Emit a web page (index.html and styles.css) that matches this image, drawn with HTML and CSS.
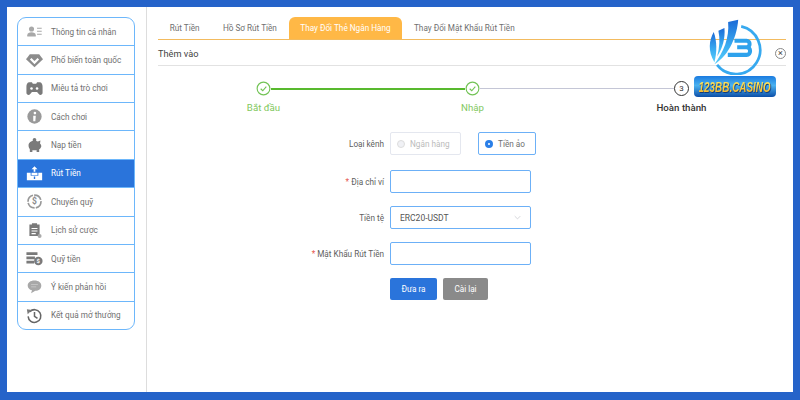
FILE: index.html
```html
<!DOCTYPE html>
<html lang="en">
<head>
    <meta charset="UTF-8">
    <title>Rút Tiền</title>
    <link rel="stylesheet" href="styles.css">
</head>
<body>
    <div class="frame">
        <aside class="side">
            <ul class="menu">
                <li class="menu-item">
                    <svg class="icon icon-light" viewBox="0 0 20 20"><circle cx="6.500" cy="7" r="3"/><path d="M1.500 16v-1.500c0-2.500 2.500-3.500 5-3.500s5 1 5 3.500V16z"/><path d="M13 5.500h5.500v1.300H13zM13 9h5.500v1.300H13zM13 12.500h5.500v1.300H13z"/></svg>
                    <span>Thông tin cá nhân</span>
                </li>
                <li class="menu-item">
                    <svg class="icon" viewBox="0 0 20 20"><path d="M4.500 2.500h11l4.500 6-10 9.500L0 8.500z"/><path d="M5.500 8l4.500 4.500L14.500 8" fill="none" stroke="#fff" stroke-width="2.600"/></svg>
                    <span>Phổ biến toàn quốc</span>
                </li>
                <li class="menu-item">
                    <svg class="icon icon-dark" viewBox="0 0 20 20"><path d="M4 2.500h3l1 2h4l1-2h3c2.500 0 3.500 2.500 3.500 5.500v7c0 2.500-3 3.500-4.500 1.500L13 14H7l-2 2.500C3.500 18.500.500 17.500.500 15V8c0-3 1-5.500 3.500-5.500z"/><circle cx="6.500" cy="10" r="1.500" fill="#fff"/><circle cx="13" cy="10" r="1.500" fill="#fff"/></svg>
                    <span>Miêu tả trò chơi</span>
                </li>
                <li class="menu-item">
                    <svg class="icon icon-mid" viewBox="0 0 20 20"><circle cx="10" cy="10" r="8.400"/><circle cx="10.500" cy="6" r="1.500" fill="#fff"/><path d="M8.500 9h3l-.5 6.500H8.500z" fill="#fff"/></svg>
                    <span>Cách chơi</span>
                </li>
                <li class="menu-item">
                    <svg class="icon icon-dark" viewBox="0 0 20 20"><circle cx="10" cy="3.500" r="2.200"/><path d="M3 10c0-3.500 3-5.500 7-5.500 1.500 0 3 .2 4 .8L17 4l-.5 3.500c1 1 1.500 2 1.500 3 0 1.500-1 3-2.500 4v3h-3v-2h-5v2h-3v-3C4 13.500 3 12 3 10z"/></svg>
                    <span>Nạp tiền</span>
                </li>
                <li class="menu-item is-active">
                    <svg class="icon" viewBox="0 0 20 20"><path d="M10 1.500l3.500 3.500H11v3H9V5H6.500z"/><path d="M1 9h4.500v3.500h9V9H19v9H1z"/><path d="M6.500 9h7v3h-7z"/><path d="M9.200 13.500h1.600v3H9.200z" fill="#2a74db"/></svg>
                    <span>Rút Tiền</span>
                </li>
                <li class="menu-item">
                    <svg class="icon" viewBox="0 0 20 20"><circle cx="10" cy="10" r="7.600" fill="none" stroke="#999" stroke-width="2" stroke-dasharray="10 1.500"/><text class="icon-dollar" x="10" y="13.500">$</text></svg>
                    <span>Chuyển quỹ</span>
                </li>
                <li class="menu-item">
                    <svg class="icon icon-dark" viewBox="0 0 20 20"><path d="M4 3h3V1.500h6V3h3v13.500H4z"/><path d="M6.500 7h7v1.300h-7zM6.500 10h7v1.300h-7zM6.500 13h5v1.300h-5z" fill="#fff"/><circle cx="16" cy="16.500" r="2.300" fill="#aaa"/></svg>
                    <span>Lịch sử cược</span>
                </li>
                <li class="menu-item">
                    <svg class="icon icon-dark" viewBox="0 0 20 20"><path d="M.500 2.500h13v3.500H.500zM.500 7.500h10V11H.500zM.500 12.500h9V16H.500z"/><circle cx="14.500" cy="13" r="5"/><text class="icon-dollar icon-dollar-small" x="14.500" y="15.500">$</text></svg>
                    <span>Quỹ tiền</span>
                </li>
                <li class="menu-item">
                    <svg class="icon icon-light" viewBox="0 0 20 20"><path d="M10 3c5 0 8 2.500 8 6s-3 6-7 6l-5 3 1-3.500C4 13.500 2 11.500 2 9c0-3.500 3-6 8-6z"/><path d="M6 7h8v1H6zM6 10h6v1H6z" fill="#ccc"/></svg>
                    <span>Ý kiến phản hồi</span>
                </li>
                <li class="menu-item">
                    <svg class="icon icon-dark" viewBox="0 0 20 20"><path d="M4.500 5.500a7.500 7.500 0 1 1-2 5.500" fill="none" stroke="#666" stroke-width="1.800"/><path d="M1 2.500l6 1-5 5z"/><path d="M10 6v5l3.500 2.500" fill="none" stroke="#666" stroke-width="1.800"/></svg>
                    <span>Kết quả mở thưởng</span>
                </li>
            </ul>
        </aside>

        <main class="content">
            <nav class="tabs">
                <a class="tab">Rút Tiền</a>
                <a class="tab">Hồ Sơ Rút Tiền</a>
                <a class="tab is-current">Thay Đổi Thẻ Ngân Hàng</a>
                <a class="tab">Thay Đổi Mật Khẩu Rút Tiền</a>
            </nav>

            <div class="panel-head">
                <span>Thêm vào</span>
                <span class="close">×</span>
            </div>

            <div class="steps">
                <div class="step is-done">
                    <svg class="step-dot" viewBox="0 0 16 16"><circle cx="8" cy="8" r="6.800"/><path d="M5 8.300l2.200 2.100L11 6"/></svg>
                    <span class="step-name">Bắt đầu</span>
                </div>
                <div class="step-line is-done"></div>
                <div class="step is-done">
                    <svg class="step-dot" viewBox="0 0 16 16"><circle cx="8" cy="8" r="6.800"/><path d="M5 8.300l2.200 2.100L11 6"/></svg>
                    <span class="step-name">Nhập</span>
                </div>
                <div class="step-line"></div>
                <div class="step is-now">
                    <span class="step-num">3</span>
                    <span class="step-name">Hoàn thành</span>
                </div>
            </div>

            <form class="form">
                <div class="row row-first">
                    <label class="row-label">Loại kênh</label>
                    <div class="choices">
                        <span class="choice is-off"><i class="dot"></i>Ngân hàng</span>
                        <span class="choice is-on"><i class="dot"></i>Tiền ảo</span>
                    </div>
                </div>
                <div class="row">
                    <label class="row-label"><b>*</b> Địa chỉ ví</label>
                    <div class="field"></div>
                </div>
                <div class="row">
                    <label class="row-label">Tiền tệ</label>
                    <div class="field field-select">ERC20-USDT
                        <svg class="chevron" viewBox="0 0 10 6"><path d="M1 1l4 4 4-4"/></svg>
                    </div>
                </div>
                <div class="row">
                    <label class="row-label"><b>*</b> Mật Khẩu Rút Tiền</label>
                    <div class="field"></div>
                </div>
                <div class="row row-buttons">
                    <span class="row-label"></span>
                    <button type="button" class="btn btn-main">Đưa ra</button>
                    <button type="button" class="btn btn-reset">Cài lại</button>
                </div>
            </form>
        </main>

        <div class="logo">
            <svg class="logo-mark" viewBox="50 10 170 170">
                <defs>
                    <linearGradient id="mark" x1="0" y1="0" x2="0" y2="1">
                        <stop offset="0" stop-color="#1c6ad6"/>
                        <stop offset="0.6" stop-color="#3aaef2"/>
                        <stop offset="1" stop-color="#58cdfa"/>
                    </linearGradient>
                </defs>
                <path d="M70 52C56 78 52 108 72 142c8-30 8-62-2-90z" fill="url(#mark)"/>
                <path d="M84 48l18-8c3 30-6 62-22 85 8-28 9-54 4-77z" fill="url(#mark)"/>
                <path d="M113 22l30-7c-3 45-25 105-71 133 28-38 45-78 41-126z" fill="url(#mark)"/>
                <path d="M152 35A72 72 0 1 1 80 150" fill="none" stroke="#37a9ef" stroke-width="8"/>
                <path d="M132 78h36c12 0 12 19 0 19h-28M168 97c14 0 14 23 0 23h-56" fill="none" stroke="#2ea2ec" stroke-width="12"/>
            </svg>
            <div class="logo-banner">
                <span class="logo-name">123BB.CASINO</span>
            </div>
        </div>
    </div>
</body>
</html>
```

FILE: styles.css
```css
* {
    box-sizing: border-box;
}

html,
body {
    height: 100%;
}

body {
    margin: 0;
    padding: 7px 7px 8px 7px;
    background-color: #2563c9;
    font-family: Roboto, 'Liberation Sans', sans-serif;
    font-size: 8.200px;
    color: #707070;
}

.frame {
    position: relative;
    display: flex;
    height: 100%;
    background-color: #ffffff;
}

.side {
    width: 140px;
    padding: 10px 11px 0 10px;
    border-right: 1px solid #dddddd;
    flex-shrink: 0;
}

.menu {
    margin: 0;
    padding: 0;
    list-style: none;
    border: 1px solid #6db7fb;
    border-radius: 9px;
    overflow: hidden;
    height: 313px;
    display: flex;
    flex-direction: column;
}

.menu-item {
    flex: 1;
    display: flex;
    align-items: center;
    padding-left: 8px;
    gap: 8px;
    border-bottom: 1px solid #6db7fb;
}

.menu-item:last-child {
    border-bottom: none;
}

.icon {
    width: 17px;
    height: 17px;
    flex-shrink: 0;
    fill: #8c8c8c;
}

.icon-light {
    fill: #a8a8a8;
}

.icon-mid {
    fill: #999999;
}

.icon-dark {
    fill: #7a7a7a;
}

.icon-dollar {
    font-size: 10px;
    font-weight: 700;
    text-anchor: middle;
    fill: #8c8c8c;
}

.icon-dollar-small {
    font-size: 7px;
    fill: #ffffff;
}

.is-active {
    background-color: #2a74db;
    color: #ffffff;
}

.is-active .icon {
    fill: #ffffff;
}

.content {
    flex: 1;
    padding: 10px 7px 0 11px;
}

.tabs {
    display: flex;
    height: 23px;
    border-bottom: 1px solid #f3bb5e;
}

.tab {
    display: flex;
    align-items: center;
    justify-content: center;
    padding: 0 11.700px;
    border-radius: 6px 6px 0 0;
    white-space: nowrap;
}

.is-current {
    background-color: #ffb846;
    color: #ffffff;
}

.panel-head {
    display: flex;
    justify-content: space-between;
    align-items: center;
    height: 26px;
    padding-top: 2px;
    border-bottom: 1px solid #e2e2e2;
    font-size: 9.200px;
    color: #444444;
}

.close {
    width: 11px;
    height: 11px;
    border: 1px solid #888888;
    border-radius: 50%;
    font-size: 9px;
    line-height: 8px;
    text-align: center;
}

.steps {
    display: flex;
    align-items: flex-start;
    padding: 15px 97px 0 98px;
    height: 66px;
}

.step {
    position: relative;
    width: 15px;
    height: 15px;
    flex-shrink: 0;
}

.step-dot {
    display: block;
    width: 15px;
    height: 15px;
    fill: none;
    stroke: #72c355;
    stroke-width: 1.200;
}

.step-name {
    position: absolute;
    top: 21px;
    left: 50%;
    transform: translateX(-50%);
    white-space: nowrap;
    font-size: 9.700px;
    color: #82c860;
}

.step-num {
    display: block;
    width: 15px;
    height: 15px;
    border: 1px solid #333333;
    border-radius: 50%;
    font-size: 8px;
    line-height: 13px;
    text-align: center;
    color: #333333;
}

.is-now .step-name {
    color: #333333;
    font-weight: 500;
}

.step-line {
    flex: 1;
    height: 1px;
    margin-top: 7px;
    background-color: #c4c6d6;
}

.step-line.is-done {
    height: 2px;
    background-color: #58b92e;
}

.form {
    display: flex;
    flex-direction: column;
    gap: 13px;
}

.row {
    display: flex;
    align-items: center;
    height: 23px;
}

.row-first {
    margin-bottom: 2px;
}

.row-label {
    width: 226px;
    margin-right: 6px;
    text-align: right;
    color: #606060;
}

.row-label b {
    color: #e6574f;
    font-weight: 400;
}

.choices {
    display: flex;
    gap: 17px;
}

.choice {
    display: flex;
    align-items: center;
    width: 71px;
    height: 23px;
    padding-left: 6px;
    gap: 5px;
    border: 1px solid #e4e7ef;
    border-radius: 2px;
    color: #bbbbbb;
}

.dot {
    width: 8px;
    height: 8px;
    border-radius: 50%;
    background-color: #f0f1f5;
    border: 1px solid #dddddd;
}

.is-on {
    width: 58px;
    border-color: #6cb0f7;
    color: #707070;
}

.is-on .dot {
    background-color: #ffffff;
    border: 3px solid #2a7fe8;
}

.field {
    display: flex;
    align-items: center;
    justify-content: space-between;
    width: 141px;
    height: 23px;
    padding: 0 9px;
    border: 1px solid #6cb0f7;
    border-radius: 2px;
    color: #555555;
}

.field-select {
    font-size: 8.500px;
}

.chevron {
    width: 7px;
    height: 5px;
    fill: none;
    stroke: #c4c6cc;
    stroke-width: 1;
}

.row-buttons {
    gap: 6px;
    height: 22px;
}

.row-buttons .row-label {
    margin-right: 0;
}

.btn {
    height: 22px;
    padding: 0;
    border: none;
    border-radius: 2px;
    font-family: inherit;
    font-size: 8.200px;
    color: #ffffff;
}

.btn-main {
    width: 47px;
    background-color: #2a74db;
}

.btn-reset {
    width: 45px;
    background-color: #8a8a8a;
}

/* logo sits on top of the tab line, top right corner */
.logo {
    position: absolute;
    top: 11px;
    left: 687px;
    width: 82px;
}

.logo-mark {
    display: block;
    width: 57px;
    height: 57px;
    margin-left: 13px;
}

.logo-banner {
    display: flex;
    justify-content: center;
    width: 82px;
    height: 21px;
    margin-top: 1px;
    border-radius: 4px;
    background: linear-gradient(#1a7be0, #4bb2f0 45%, #0d4fa8);
    overflow: hidden;
}

.logo-name {
    flex-shrink: 0;
    font-family: 'Liberation Sans', sans-serif;
    font-size: 15px;
    font-weight: 700;
    font-style: italic;
    line-height: 21px;
    white-space: nowrap;
    background: linear-gradient(#fff27a, #ffd23c 55%, #f0a020);
    -webkit-background-clip: text;
    background-clip: text;
    color: transparent;
    filter: drop-shadow(1px 1px 0 #123a7a);
    transform: scaleX(0.66);
}
```
